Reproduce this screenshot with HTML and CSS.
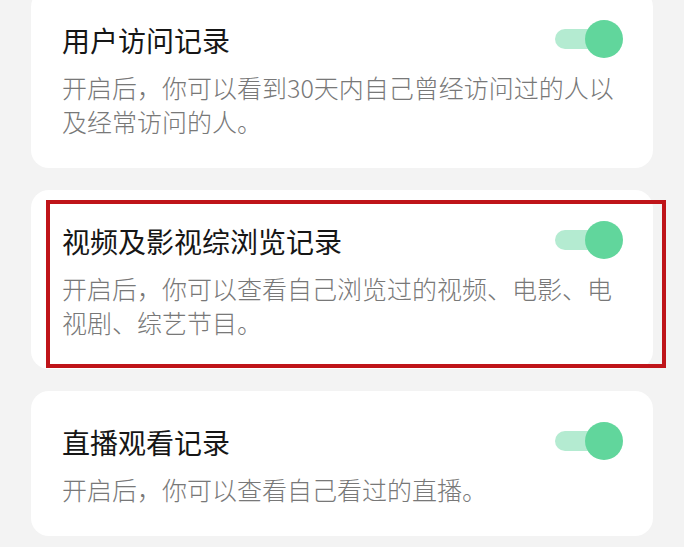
FILE: index.html
```html
<!DOCTYPE html>
<html lang="zh-CN">
<head>
<meta charset="utf-8">
<title>隐私设置</title>
<link rel="stylesheet" href="styles.css">
</head>
<body>
<main class="list">
  <section class="card card-first">
    <div class="row">
      <h2 class="title">用户访问记录</h2>
      <span class="toggle"><span class="track"></span><span class="knob"></span></span>
    </div>
    <p class="desc">开启后，你可以看到30天内自己曾经访问过的人以及经常访问的人。</p>
  </section>
  <section class="card card-marked">
    <div class="mark"></div>
    <div class="row">
      <h2 class="title">视频及影视综浏览记录</h2>
      <span class="toggle"><span class="track"></span><span class="knob"></span></span>
    </div>
    <p class="desc">开启后，你可以查看自己浏览过的视频、电影、电视剧、综艺节目。</p>
  </section>
  <section class="card">
    <div class="row">
      <h2 class="title">直播观看记录</h2>
      <span class="toggle"><span class="track"></span><span class="knob"></span></span>
    </div>
    <p class="desc">开启后，你可以查看自己看过的直播。</p>
  </section>
</main>
</body>
</html>
```

FILE: styles.css
```css
html, body {
  margin: 0;
  padding: 0;
  background: #f3f3f3;
}
body {
  width: 684px;
  height: 547px;
  overflow: hidden;
  font-family: "Noto Sans CJK SC", "Noto Sans", sans-serif;
}
.list {
  display: flex;
  flex-direction: column;
  gap: 22px;
  padding: 0 31px;
  margin-top: -11px;
}
.card {
  position: relative;
  background: #ffffff;
  border-radius: 18px;
  padding: 31px 31px 30px 31px;
}
.row {
  display: flex;
  align-items: center;
  justify-content: space-between;
  height: 40px;
}
.title {
  margin: 0;
  font-size: 28px;
  font-weight: 400;
  line-height: 40px;
  color: #161616;
}
.desc {
  margin: 10px 0 0 0;
  font-size: 25px;
  font-weight: 300;
  line-height: 34px;
  color: #787878;
}
.toggle {
  position: relative;
  width: 68px;
  height: 38px;
  margin-right: -1px;
  margin-top: -3px;
  flex: none;
}
.track {
  position: absolute;
  left: 0;
  top: 9px;
  width: 60px;
  height: 20px;
  border-radius: 10px;
  background: #b4ebd1;
}
.knob {
  position: absolute;
  right: 0;
  top: 0;
  width: 38px;
  height: 38px;
  border-radius: 50%;
  background: #61d69c;
}
.mark {
  position: absolute;
  left: 15px;
  top: 10px;
  right: -13px;
  bottom: 1px;
  border: 4px solid #bf1419;
  pointer-events: none;
}
```
